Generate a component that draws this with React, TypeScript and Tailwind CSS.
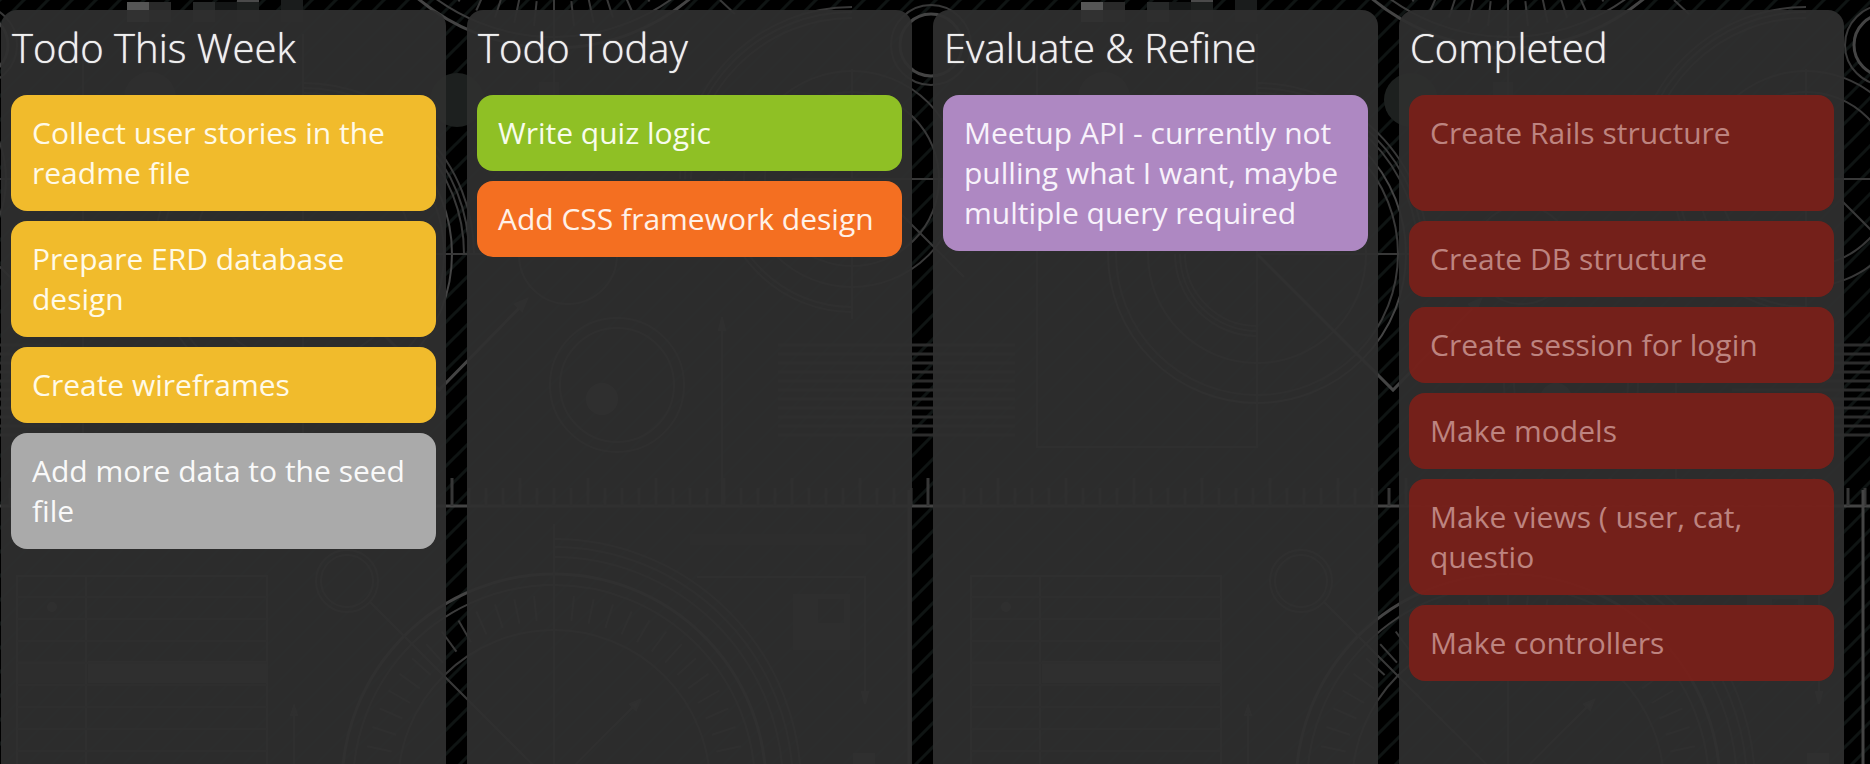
type Card = { text: string; tall?: boolean };
type Column = { title: string; cards: (Card & { tone: keyof typeof tones })[] };

const tones = {
  yellow: "bg-[#f1bb2c] text-[#fffae8]",
  gray: "bg-[#aaaaaa] text-[#f9f9f9]",
  green: "bg-[#8fc025] text-[#f8fcec]",
  orange: "bg-[#f46f21] text-[#fff1e8]",
  purple: "bg-[#ae88c2] text-[#f8f2fb]",
  done: "bg-[#79201a]/94 text-[#bd8480]",
};

const columns: Column[] = [
  {
    title: "Todo This Week",
    cards: [
      { text: "Collect user stories in the readme file", tone: "yellow" },
      { text: "Prepare ERD database design", tone: "yellow" },
      { text: "Create wireframes", tone: "yellow" },
      { text: "Add more data to the seed file", tone: "gray" },
    ],
  },
  {
    title: "Todo Today",
    cards: [
      { text: "Write quiz logic", tone: "green" },
      { text: "Add CSS framework design", tone: "orange" },
    ],
  },
  {
    title: "Evaluate & Refine",
    cards: [
      {
        text: "Meetup API - currently not pulling what I want, maybe multiple query required",
        tone: "purple",
      },
    ],
  },
  {
    title: "Completed",
    cards: [
      { text: "Create Rails structure", tone: "done", tall: true },
      { text: "Create DB structure", tone: "done" },
      { text: "Create session for login", tone: "done" },
      { text: "Make models", tone: "done" },
      { text: "Make views ( user, cat, questio", tone: "done" },
      { text: "Make controllers", tone: "done" },
    ],
  },
];

const TILE = 954;
const range = (n: number) => Array.from({ length: n }, (_, i) => i);

function Dial({ cy }: { cy: number }) {
  return (
    <g transform={`translate(554 ${cy})`}>
      <circle r="212" stroke="#444" strokeWidth="3" />
      <circle r="201" stroke="#3c3c3c" />
      <circle r="156" />
      {range(60).map((i) => (
        <line key={i} y1="-191" y2="-166" transform={`rotate(${i * 6})`} />
      ))}
      <path d="M0 -247A247 247 0 0 1 247 0M0 -239A239 239 0 0 1 239 0M0 -229A229 229 0 0 1 229 0" />
      <path d="M0 -262V262M-184 -184L0 0M20 -20L86 -86" />
      <path d="M86 -86l-10 4l6 6z" fill="#444" />
    </g>
  );
}

function Blueprint() {
  return (
    <g fill="none" stroke="#383838" strokeWidth="2">
      <g stroke="none">
        <rect x="127" y="2" width="22" height="20" fill="#555" />
        <rect x="149" y="2" width="22" height="20" fill="#292929" />
        <rect x="193" y="2" width="22" height="20" fill="#262828" />
        <rect x="215" y="2" width="22" height="8" fill="#141616" />
        <rect x="237" y="0" width="22" height="2" fill="#4a4a4a" />
        <rect x="237" y="2" width="22" height="20" fill="#1c1f1e" />
        <rect x="281" y="0" width="22" height="22" fill="#1a1c1c" />
        <circle cx="150" cy="98" r="26" fill="#2c2c2c" />
        <circle cx="457" cy="100" r="27" fill="#1d201f" />
        <circle cx="602" cy="399" r="16" fill="#3c3c3c" />
        <circle cx="52" cy="607" r="5" fill="#3c3c3c" />
        <rect x="88" y="661" width="178" height="22" fill="#333" />
        <rect x="17" y="661" width="68" height="22" fill="#1c1c1c" />
        <rect x="539" y="82" width="20" height="20" fill="#2c2c2c" />
        <rect x="690" y="534" width="176" height="11" fill="#181818" />
        <path d="M793 594h57v56h-57zM818 599v24h26v-24z" fill="#222" fillRule="evenodd" />
        <rect x="853" y="753" width="22" height="22" fill="#333" />
      </g>

      <Dial cy={-164} />
      <Dial cy={786} />

      <g transform="translate(303 254)">
        <circle r="149" stroke="#444" />
        <circle r="141" />
        <circle r="109" />
        <path d="M0 -171A171 171 0 0 1 171 0M0 -166A166 166 0 0 1 166 0M0 -161A161 161 0 0 1 161 0" />
        <path d="M-82 0A82 82 0 0 0 0 82M-77 0A77 77 0 0 0 0 77M-72 0A72 72 0 0 0 0 72" />
        <path d="M-220 -200V193H0V-220M0 0H265" />
        <path d="M0 0L136 136L220 50" stroke="#444" strokeWidth="3" />
      </g>
      <path d="M527 299l-12 5l7 7z" fill="#383838" />

      <g transform="translate(852 179)">
        <circle r="108" />
        <circle r="87" />
        <path d="M0 -172A172 172 0 0 0 -172 0M0 -167A167 167 0 0 0 -167 0M0 -161A161 161 0 0 0 -161 0" />
        <path d="M-133 0A133 133 0 0 0 0 133M-128 0A128 128 0 0 0 0 128" />
        <path d="M0 -110V140M-60 0H120M36 22L112 98" />
      </g>
      <circle cx="931" cy="45" r="40" />
      <circle cx="931" cy="45" r="31" stroke="#444" strokeWidth="3" fill="#000" />
      <path d="M720 0L735 14" />

      <circle cx="568" cy="255" r="49" />
      <circle cx="617" cy="385" r="67" />
      <circle cx="617" cy="385" r="57" />
      <path d="M722 317V506" />
      <path d="M722 318l-3 12h6z" fill="#383838" />

      {range(11).map((i) => (
        <path key={i} d={`M778 ${345 + i * 9}H1015`} strokeWidth="3" stroke="#2c2c2c" />
      ))}

      <path d={`M0 506H${TILE}`} stroke="#444" strokeWidth="3" />
      {range(55).map((i) => (
        <path
          key={i}
          d={i % 4 === 2 ? `M${10 + i * 17} 478V506` : `M${10 + i * 17} 488V506`}
          strokeWidth="3"
          stroke="#363636"
        />
      ))}
      <path d="M909 490V764" stroke="#444" strokeWidth="3" />

      <path d="M17 764V576H267V764M86 576V764" />
      {range(8).map((i) => (
        <path key={i} d={`M17 ${597 + i * 22}H267`} stroke="#222" />
      ))}
      <circle cx="347" cy="581" r="31" />
      <circle cx="347" cy="581" r="26" />
      <path d="M294 706V764" />
      <path d="M294 706l-3 9h6z" />
      <path d="M697 577H865V700" />
      <path d="M865 704l-3 -12h6z" fill="#383838" />
    </g>
  );
}

function Backdrop() {
  return (
    <svg className="absolute inset-0 size-full" aria-hidden="true">
      <defs>
        <pattern id="hatch" width="24" height="24" patternUnits="userSpaceOnUse">
          <path d="M-6 6L6 -6M-2 26L26 -2M18 30L30 18" stroke="#0f1413" strokeWidth="3" />
        </pattern>
      </defs>
      <rect width="100%" height="100%" fill="#000" />
      <rect width="100%" height="100%" fill="url(#hatch)" />
      {range(4).map((i) => (
        <g key={i} transform={`translate(${(i - 1) * TILE} 0)`}>
          <Blueprint />
        </g>
      ))}
    </svg>
  );
}

export default function App() {
  return (
    <div className="relative min-h-screen overflow-hidden bg-black font-['Open_Sans','Noto_Sans',sans-serif]">
      <Backdrop />
      <main className="relative flex min-h-screen gap-[21px] pt-[10px] pr-[26px] pl-px">
        {columns.map((column) => (
          <section
            key={column.title}
            className="min-w-0 flex-1 rounded-t-2xl bg-[#2f2f2f]/94 px-[10px] pb-[10px]"
          >
            <h2 className="px-px pt-4 pb-[25px] text-[40px] leading-[44px] font-light text-[#f0f0f0] [text-shadow:0_0_1px_#e6e6e6]">
              {column.title}
            </h2>
            <ul className="flex flex-col gap-[10px]">
              {column.cards.map((card) => (
                <li
                  key={card.text}
                  className={`rounded-2xl px-[21px] py-[18px] text-[30px] leading-[40px] ${tones[card.tone]} ${card.tall ? "min-h-[116px]" : ""}`}
                >
                  {card.text}
                </li>
              ))}
            </ul>
          </section>
        ))}
      </main>
    </div>
  );
}
